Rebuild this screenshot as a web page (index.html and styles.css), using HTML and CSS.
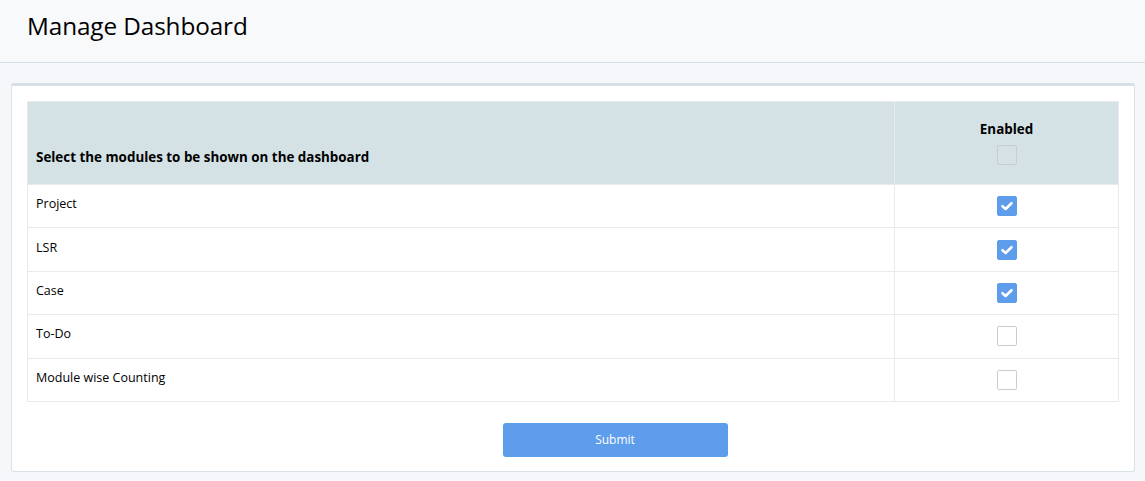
FILE: index.html
```html
<!DOCTYPE html>
<html lang="en">
<head>
<meta charset="utf-8">
<title>Manage Dashboard</title>
<link rel="stylesheet" href="styles.css">
</head>
<body>
<header class="page-header">
  <h1 class="page-title">Manage Dashboard</h1>
</header>
<main class="page-body">
  <section class="card">
    <table class="modules">
      <thead>
        <tr>
          <th class="col-name">Select the modules to be shown on the dashboard</th>
          <th class="col-enabled">
            <div class="enabled-head">
              <span>Enabled</span>
              <span class="cb cb-head"></span>
            </div>
          </th>
        </tr>
      </thead>
      <tbody>
        <tr><td>Project</td><td class="cell-cb"><span class="cb cb-on"><svg viewBox="0 0 20 20" width="20" height="20"><path d="M5.5 10.2 L8.6 13 L14.5 7.2" fill="none" stroke="#fff" stroke-width="2.6" stroke-linecap="round" stroke-linejoin="round"/></svg></span></td></tr>
        <tr><td>LSR</td><td class="cell-cb"><span class="cb cb-on"><svg viewBox="0 0 20 20" width="20" height="20"><path d="M5.5 10.2 L8.6 13 L14.5 7.2" fill="none" stroke="#fff" stroke-width="2.6" stroke-linecap="round" stroke-linejoin="round"/></svg></span></td></tr>
        <tr><td>Case</td><td class="cell-cb"><span class="cb cb-on"><svg viewBox="0 0 20 20" width="20" height="20"><path d="M5.5 10.2 L8.6 13 L14.5 7.2" fill="none" stroke="#fff" stroke-width="2.6" stroke-linecap="round" stroke-linejoin="round"/></svg></span></td></tr>
        <tr><td>To-Do</td><td class="cell-cb"><span class="cb"></span></td></tr>
        <tr><td>Module wise Counting</td><td class="cell-cb"><span class="cb"></span></td></tr>
      </tbody>
    </table>
    <div class="actions">
      <button class="btn-submit" type="button">Submit</button>
    </div>
  </section>
</main>
</body>
</html>
```
FILE: styles.css
```css
* { box-sizing: border-box; }
html, body {
  margin: 0;
  padding: 0;
  background: #f5f7fa;
  font-family: "Open Sans", "Noto Sans", sans-serif;
  color: #000;
}
.page-header {
  height: 63px;
  background: #f8f9fb;
  border-bottom: 1px solid #d3dfe5;
  display: flex;
  align-items: flex-start;
  padding-left: 27px;
}
.page-title {
  margin: 8px 0 0;
  font-size: 24.3px;
  font-weight: 400;
  line-height: 36px;
  letter-spacing: -0.1px;
}
.page-body {
  padding: 20px 10px 9px 11px;
}
.card {
  background: #fff;
  border: 1px solid #dbe2e7;
  border-top: 3px solid #d6dfe5;
  border-radius: 3px;
  padding: 15px 15px 14px 15px;
}
.modules {
  width: 100%;
  border-collapse: collapse;
  border: 1px solid #e8eaec;
}
.modules th, .modules td {
  border: 1px solid #e8eaec;
  text-align: left;
}
.modules thead th {
  background: #d4e2e5;
  height: 83px;
  font-size: 13.4px;
  font-weight: 700;
  vertical-align: bottom;
  padding: 0 8px 18px;
}
.modules thead th.col-enabled {
  width: 224px;
  padding: 0 0 19px;
  text-align: center;
}
.enabled-head {
  display: flex;
  flex-direction: column;
  align-items: center;
  gap: 7px;
}
.modules td {
  height: 43.4px;
  font-size: 12.5px;
  padding: 0 8px 5px;
  vertical-align: middle;
}
.modules td.cell-cb {
  text-align: center;
  padding: 0;
}
.cb {
  display: inline-block;
  width: 20px;
  height: 20px;
  border: 1px solid #cccccc;
  border-radius: 2px;
  background: #fff;
  vertical-align: middle;
}
.cb-head {
  background: #d4e2e5;
}
.cb-on {
  background: #5e9cec;
  border-color: #5e9cec;
}
.cb-on svg {
  display: block;
  margin: -1px;
}
.actions {
  display: flex;
  justify-content: center;
  padding-top: 21px;
  padding-left: 84px;
}
.btn-submit {
  width: 225px;
  height: 34px;
  background: #5e9cec;
  border: none;
  border-radius: 3px;
  color: #fff;
  font-family: "Open Sans", "Noto Sans", sans-serif;
  font-size: 12px;
}
```
